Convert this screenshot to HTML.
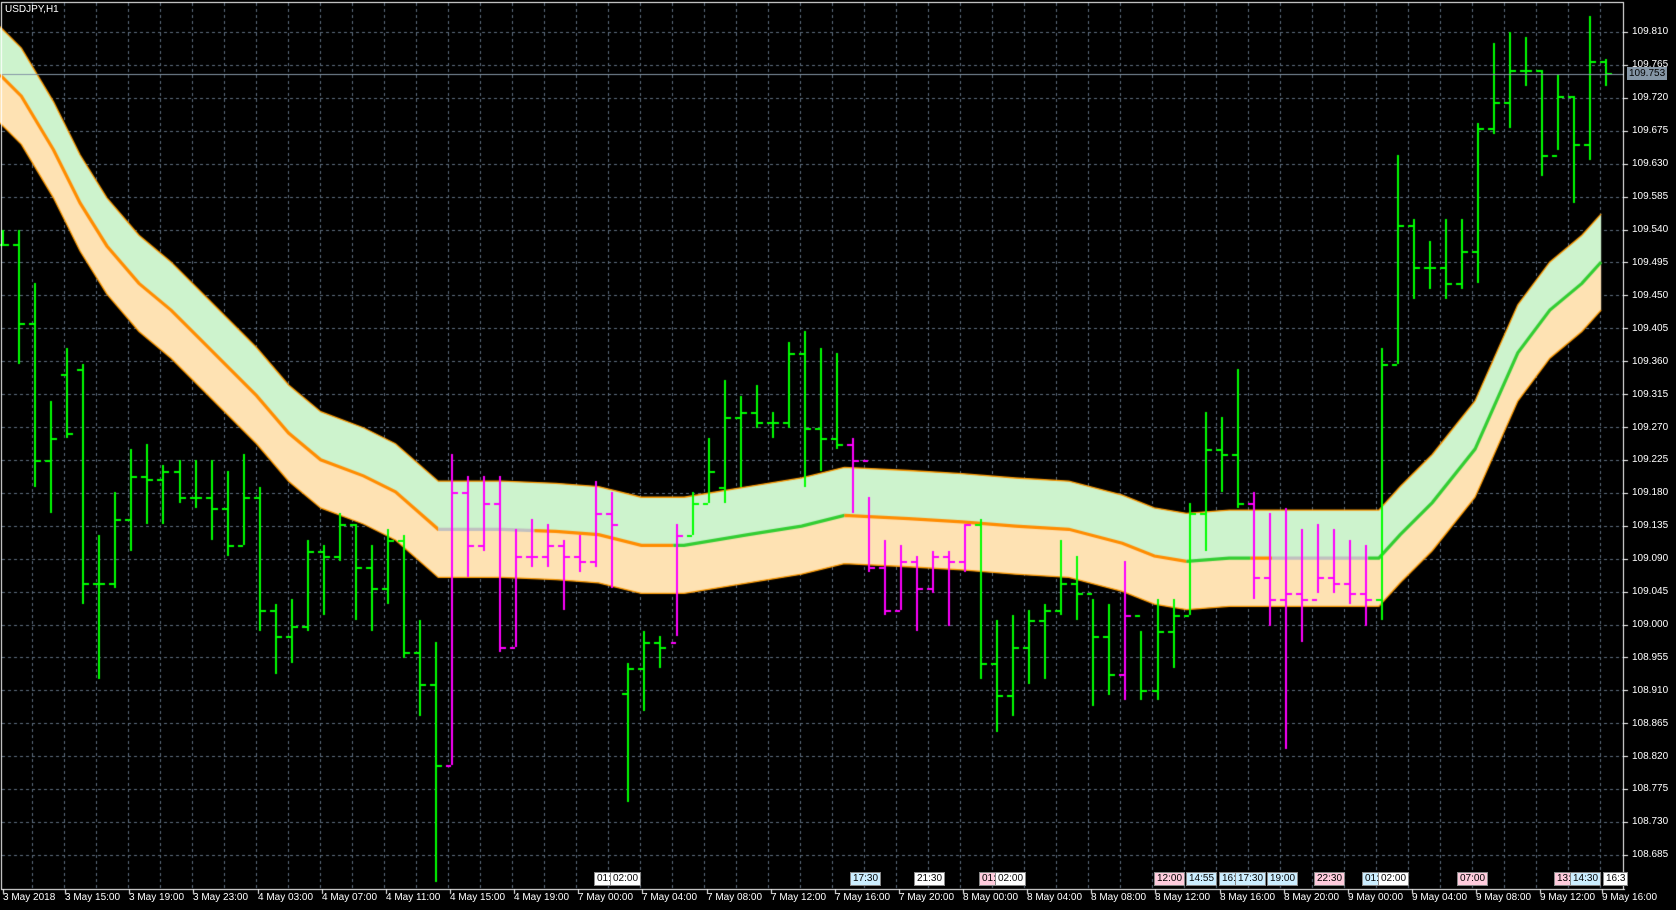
<!DOCTYPE html>
<html><head><meta charset="utf-8"><style>
html,body{margin:0;padding:0;background:#000;width:1676px;height:910px;overflow:hidden}
#c{position:absolute;left:0;top:0}
.t{position:absolute;color:#fff;font:10px "Liberation Sans",sans-serif;white-space:nowrap;line-height:13px}
.p{left:1632px}
.b{top:891px}
.m{position:absolute;top:872px;height:12px;font:10px "Liberation Sans",sans-serif;line-height:12px;color:#000;padding:0 2px;border:1px solid #888}
</style></head><body>
<canvas id="c" width="1676" height="910"></canvas>
<div class="t" style="left:5px;top:3px;font-size:10px">USDJPY,H1</div>
<div class="t p" style="top:25px">109.810</div>
<div class="t p" style="top:58px">109.765</div>
<div class="t p" style="top:91px">109.720</div>
<div class="t p" style="top:124px">109.675</div>
<div class="t p" style="top:157px">109.630</div>
<div class="t p" style="top:190px">109.585</div>
<div class="t p" style="top:223px">109.540</div>
<div class="t p" style="top:256px">109.495</div>
<div class="t p" style="top:289px">109.450</div>
<div class="t p" style="top:322px">109.405</div>
<div class="t p" style="top:355px">109.360</div>
<div class="t p" style="top:388px">109.315</div>
<div class="t p" style="top:421px">109.270</div>
<div class="t p" style="top:453px">109.225</div>
<div class="t p" style="top:486px">109.180</div>
<div class="t p" style="top:519px">109.135</div>
<div class="t p" style="top:552px">109.090</div>
<div class="t p" style="top:585px">109.045</div>
<div class="t p" style="top:618px">109.000</div>
<div class="t p" style="top:651px">108.955</div>
<div class="t p" style="top:684px">108.910</div>
<div class="t p" style="top:717px">108.865</div>
<div class="t p" style="top:750px">108.820</div>
<div class="t p" style="top:782px">108.775</div>
<div class="t p" style="top:815px">108.730</div>
<div class="t p" style="top:848px">108.685</div>
<div class="t p" style="top:67px;left:1627px;background:#8596a6;color:#000;padding:0 2px">109.753</div>
<div class="t b" style="left:3px">3 May 2018</div>
<div class="t b" style="left:65px">3 May 15:00</div>
<div class="t b" style="left:129px">3 May 19:00</div>
<div class="t b" style="left:193px">3 May 23:00</div>
<div class="t b" style="left:258px">4 May 03:00</div>
<div class="t b" style="left:322px">4 May 07:00</div>
<div class="t b" style="left:386px">4 May 11:00</div>
<div class="t b" style="left:450px">4 May 15:00</div>
<div class="t b" style="left:514px">4 May 19:00</div>
<div class="t b" style="left:578px">7 May 00:00</div>
<div class="t b" style="left:642px">7 May 04:00</div>
<div class="t b" style="left:707px">7 May 08:00</div>
<div class="t b" style="left:771px">7 May 12:00</div>
<div class="t b" style="left:835px">7 May 16:00</div>
<div class="t b" style="left:899px">7 May 20:00</div>
<div class="t b" style="left:963px">8 May 00:00</div>
<div class="t b" style="left:1027px">8 May 04:00</div>
<div class="t b" style="left:1091px">8 May 08:00</div>
<div class="t b" style="left:1155px">8 May 12:00</div>
<div class="t b" style="left:1220px">8 May 16:00</div>
<div class="t b" style="left:1284px">8 May 20:00</div>
<div class="t b" style="left:1348px">9 May 00:00</div>
<div class="t b" style="left:1412px">9 May 04:00</div>
<div class="t b" style="left:1476px">9 May 08:00</div>
<div class="t b" style="left:1540px">9 May 12:00</div>
<div class="t b" style="left:1602px">9 May 16:00</div>
<div class="m" style="left:594px;background:#fff">01:</div><div class="m" style="left:610px;background:#fff">02:00</div>
<div class="m" style="left:850px;background:#cef">17:30</div>
<div class="m" style="left:914px;background:#fff">21:30</div>
<div class="m" style="left:979px;background:#fcd">01:</div><div class="m" style="left:995px;background:#fff">02:00</div>
<div class="m" style="left:1154px;background:#fcd">12:00</div>
<div class="m" style="left:1186px;background:#cef">14:55</div>
<div class="m" style="left:1219px;background:#cef">16:</div><div class="m" style="left:1235px;background:#cef">17:30</div>
<div class="m" style="left:1267px;background:#cef">19:00</div>
<div class="m" style="left:1314px;background:#fcd">22:30</div>
<div class="m" style="left:1362px;background:#cef">01:</div><div class="m" style="left:1378px;background:#fff">02:00</div>
<div class="m" style="left:1457px;background:#fcd">07:00</div>
<div class="m" style="left:1554px;background:#fcd">13:</div><div class="m" style="left:1570px;background:#cef">14:30</div><div class="m" style="left:1603px;background:#fff">16:3</div>
<script>
var c=document.getElementById('c'),g=c.getContext('2d');
g.fillStyle='#000';g.fillRect(0,0,1676,910);
g.strokeStyle='#5f6f80';g.lineWidth=1;g.setLineDash([3,3]);
for(var x=32;x<1624;x+=32){g.beginPath();g.moveTo(x+.5,3);g.lineTo(x+.5,889);g.stroke();}
for(var k=0;k<26;k++){var y=Math.round(32+32.92*k)+.5;g.beginPath();g.moveTo(2,y);g.lineTo(1624,y);g.stroke();}
g.setLineDash([]);
g.save();g.scale(1676/1568,910/851);
var C=[[0,70],[20,90],[50,140],[75,190],[100,230],[130,265],[160,290],[190,320],[215,345],[240,370],[270,405],[300,430],[340,445],[370,460],[410,495],[470,495],[520,497],[560,500],[600,510],[640,510],[700,500],[750,492],[790,482],[850,485],[900,488],[950,492],[1000,495],[1050,508],[1080,520],[1110,525],[1150,522],[1200,522],[1290,522],[1310,500],[1340,470],[1380,420],[1420,330],[1450,290],[1480,265],[1498,245]];
function path(off){g.moveTo(C[0][0],C[0][1]+off);for(var i=1;i<C.length;i++)g.lineTo(C[i][0],C[i][1]+off);}
function band(a,b,col){g.beginPath();path(a);for(var i=C.length-1;i>=0;i--)g.lineTo(C[i][0],C[i][1]+b);g.closePath();g.fillStyle=col;g.fill();}
band(-45,0,'#cdf3cd');band(0,45,'#fee2b3');
g.lineWidth=1.2;g.strokeStyle='#ff9a00';g.beginPath();path(-45);g.stroke();g.beginPath();path(45);g.stroke();
function seg(x0,x1,col){g.save();g.beginPath();g.rect(x0,0,x1-x0,851);g.clip();g.lineWidth=3;g.strokeStyle=col;g.beginPath();path(0);g.stroke();g.restore();}
seg(0,410,'#ff8c00');seg(410,500,'#c0c0c0');seg(500,630,'#ff8c00');seg(630,790,'#32cd32');seg(790,1110,'#ff8c00');seg(1110,1170,'#32cd32');seg(1170,1190,'#ff8c00');seg(1190,1280,'#c0c0c0');seg(1280,1500,'#32cd32');
g.restore();
var B=[[215,230,228,228],[215,340,228,302],[265,455,302,430],[375,480,430,410],[325,410,350,405],[340,565,345,545],[500,635,545,545],[460,550,545,485],[420,515,485,445],[415,490,445,448],[435,490,448,440],[430,470,440,465],[430,475,465,465],[430,505,465,475],[440,520,475,510],[425,510,510,465],[455,590,465,570],[565,630,570,595],[560,620,595,585],[505,590,585,515],[510,575,515,520],[480,525,520,490],[490,580,490,530],[510,590,530,550],[495,565,550,505],[500,615,505,610],[580,670,610,640],[600,825,640,715],[425,715,715,460],[445,540,460,510],[445,515,510,470],[445,610,470,605],[495,605,605,520],[485,530,520,520],[490,530,520,510],[505,570,510,520],[500,535,520,525],[450,530,525,480],[460,550,480,490],[620,750,648,625],[590,665,625,600],[595,625,600,605],[490,595,600,500],[460,500,500,470],[410,470,470,440],[355,470,455,390],[370,455,390,385],[360,400,385,395],[385,410,395,395],[320,400,395,330],[310,455,330,400],[325,440,400,410],[330,420,410,415],[410,480,415,430],[465,535,430,530],[505,575,530,570],[510,570,570,525],[520,590,525,550],[515,555,550,520],[515,585,520,525],[490,535,525,490],[485,635,490,620],[580,685,620,650],[575,670,650,605],[570,640,605,580],[565,635,580,570],[505,575,570,545],[520,580,545,555],[560,660,555,595],[565,650,595,630],[525,655,630,575],[590,655,575,645],[560,655,645,590],[560,625,590,575],[470,575,575,480],[385,515,480,420],[390,460,420,425],[345,475,425,470],[460,560,470,540],[480,585,540,560],[475,700,560,555],[495,600,555,560],[490,555,560,540],[495,555,540,545],[505,565,545,555],[510,585,555,560],[325,580,560,340],[145,340,340,210],[205,280,210,250],[225,270,250,250],[205,280,250,265],[205,270,265,235],[115,265,235,120],[40,125,120,95],[30,120,95,65],[35,80,65,65],[65,165,65,145],[70,140,145,90],[90,190,90,135],[15,150,135,57],[55,80,57,68]];
var sx=1676/1568,sy=910/851;
function mag(i){return (i>=28&&i<=38)||i==42||(i>=53&&i<=60)||i==70||(i>=78&&i<=85);}
for(var i=0;i<B.length;i++){var b=B[i];var x=Math.round((2+15*i)*sx);
 g.fillStyle=mag(i)?'#ff00ff':'#00ff00';
 var h=Math.round(b[0]*sy),l=Math.round(b[1]*sy),o=Math.round(b[2]*sy),cl=Math.round(b[3]*sy);
 g.fillRect(x,h,2,l-h);g.fillRect(x-5,o,5,2);g.fillRect(x+2,cl,5,2);}
g.fillStyle='#8596a6';g.fillRect(2,74,1622,1);
g.fillStyle='#fff';g.fillRect(1,2,1,888);g.fillRect(1,889,1624,1);g.fillRect(1623,2,1,888);g.fillRect(1,2,1623,1);
var T=[3,65,129,193,258,322,386,450,514,578,642,707,771,835,899,963,1027,1091,1155,1220,1284,1348,1412,1476,1540,1602];
T.forEach(function(x){g.fillRect(x,889,1,5);});
for(var k=0;k<26;k++){g.fillRect(1623,Math.round(32+32.92*k),5,1);}
</script>
</body></html>
